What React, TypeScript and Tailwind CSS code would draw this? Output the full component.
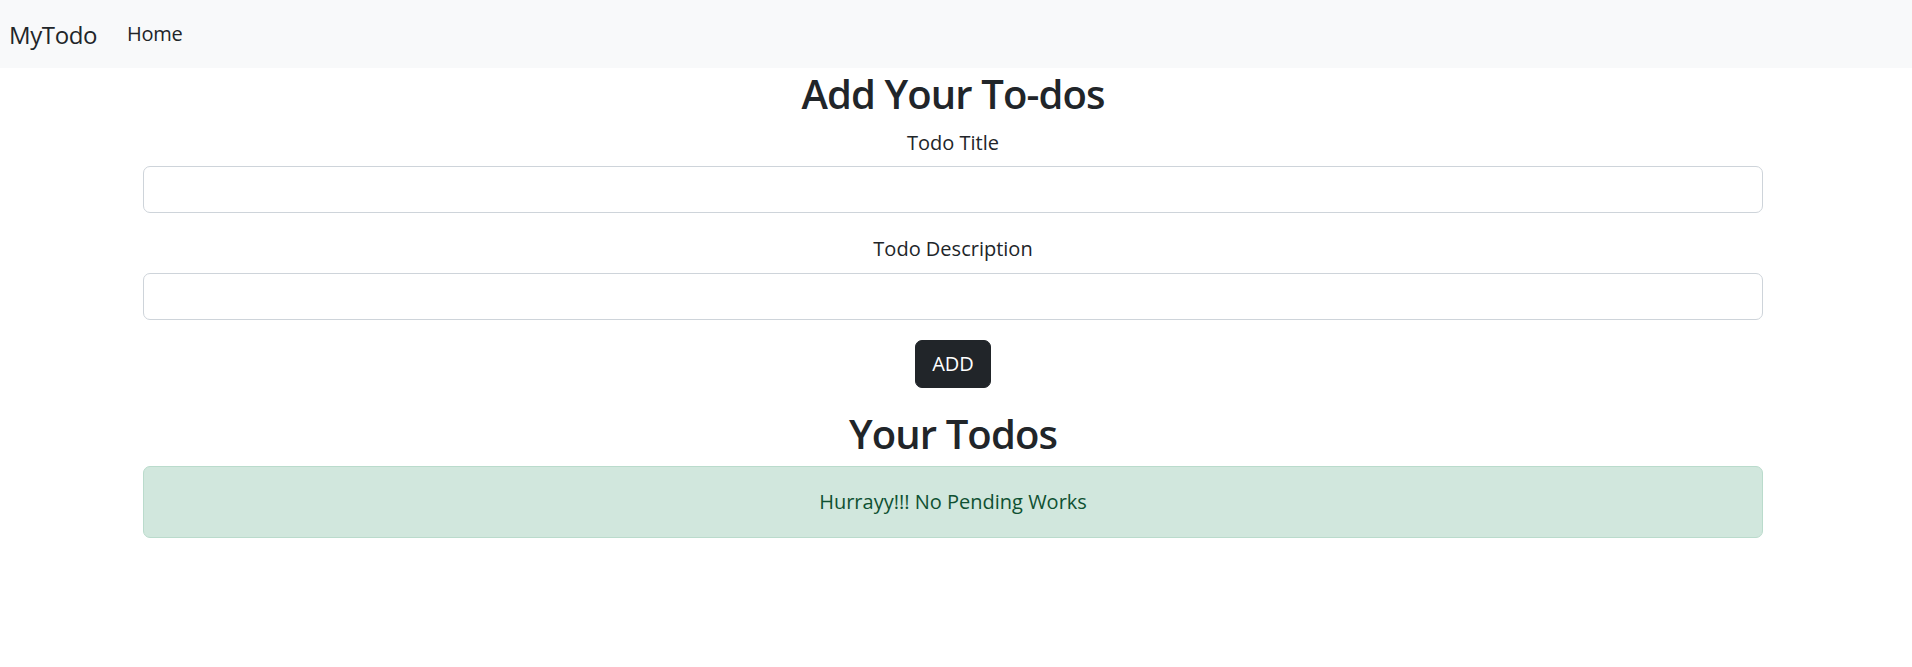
import React, { useState } from 'react';

const FONT = '[font-family:"Open_Sans",sans-serif]';

function Navbar() {
  return (
    <nav className="h-[68px] bg-[#f8f9fa] flex items-center px-[9px]">
      <a className="text-[24px] leading-[37px] tracking-[-0.4px] text-[#212529] mr-[20px]">MyTodo</a>
      <a className="text-[20px] leading-[30px] tracking-[-0.3px] text-[#212529] px-[10px]">Home</a>
    </nav>
  );
}

export default function App() {
  const [title, setTitle] = useState('');
  const [desc, setDesc] = useState('');

  return (
    <div className={`${FONT} min-h-[667px] bg-white text-[#212529]`}>
      <Navbar />
      <div className="mx-auto max-w-[1626px] pr-[6px]">
        <h2 className="text-[40px] leading-[48px] font-semibold tracking-[-0.9px] text-center mt-[2px] mb-[10px]">Add Your To-dos</h2>
        <form className="flex flex-col" onSubmit={(e) => e.preventDefault()}>
          <label className="text-[20px] leading-[30px] text-center mb-[8px]">Todo Title</label>
          <input
            value={title}
            onChange={(e) => setTitle(e.target.value)}
            className="h-[47px] border border-[#ced4da] rounded-[7px] px-[15px] text-[20px] mb-[21px] outline-none"
          />
          <label className="text-[20px] leading-[30px] text-center mb-[9px]">Todo Description</label>
          <input
            value={desc}
            onChange={(e) => setDesc(e.target.value)}
            className="h-[47px] border border-[#ced4da] rounded-[7px] px-[15px] text-[20px] mb-[20px] outline-none"
          />
          <div className="flex justify-center">
            <button className="h-[48px] px-[16px] bg-[#212529] border border-[#212529] text-white text-[20px] rounded-[7px]">ADD</button>
          </div>
        </form>
        <h2 className="text-[40px] leading-[48px] font-semibold tracking-[-0.9px] text-center mt-[22px] mb-[8px]">Your Todos</h2>
        <div className="bg-[#d1e7dd] border border-[#badbcc] text-[#0f5132] rounded-[7px] p-[20px] text-[20px] leading-[30px] text-center">
          Hurrayy!!! No Pending Works
        </div>
      </div>
    </div>
  );
}
